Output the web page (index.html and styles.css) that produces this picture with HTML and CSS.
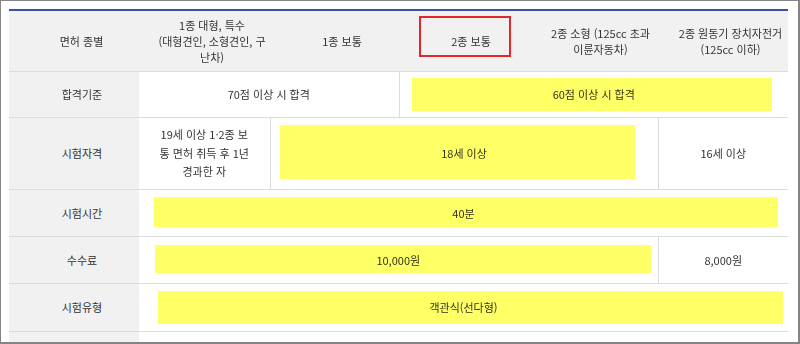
FILE: index.html
```html
<!DOCTYPE html>
<html lang="ko">
<head>
  <meta charset="UTF-8" />
  <meta name="viewport" content="width=device-width, initial-scale=1.0" />
  <title>운전면허 시험 안내</title>
  <link rel="stylesheet" href="styles.css">
</head>
<body>
  <div class="frame">
    <table class="license">
      <colgroup>
        <col class="c-label" />
        <col class="c1" />
        <col class="c2" />
        <col class="c3" />
        <col class="c4" />
        <col class="c5" />
      </colgroup>
      <tr class="r-head">
        <th class="label">면허 종별</th>
        <th>1종 대형, 특수<br/>(대형견인, 소형견인, 구<br/>난차)</th>
        <th>1종 보통</th>
        <th class="pick">2종 보통<span class="box"></span></th>
        <th>2종 소형 (125cc 초과<br/>이륜자동차)</th>
        <th>2종 원동기 장치자전거<br/>(125cc 이하)</th>
      </tr>
      <tr class="r-pass">
        <th class="label">합격기준</th>
        <td colspan="2" class="first">70점 이상 시 합격</td>
        <td colspan="3">60점 이상 시 합격<span class="hl hl-pass"></span></td>
      </tr>
      <tr class="r-age">
        <th class="label">시험자격</th>
        <td class="first multi">19세 이상 1·2종 보<br/>통 면허 취득 후 1년<br/>경과한 자</td>
        <td colspan="3">18세 이상<span class="hl hl-age"></span></td>
        <td>16세 이상</td>
      </tr>
      <tr class="r-time">
        <th class="label">시험시간</th>
        <td colspan="5" class="first">40분<span class="hl hl-time"></span></td>
      </tr>
      <tr class="r-fee">
        <th class="label">수수료</th>
        <td colspan="4" class="first">10,000원<span class="hl hl-fee"></span></td>
        <td>8,000원</td>
      </tr>
      <tr class="r-type">
        <th class="label">시험유형</th>
        <td colspan="5" class="first">객관식(선다형)<span class="hl hl-type"></span></td>
      </tr>
      <tr class="r-more">
        <th class="label"></th>
        <td colspan="5" class="first"></td>
      </tr>
    </table>
  </div>
</body>
</html>
```

FILE: styles.css
```css
body {
  margin: 0;
  font-family: "Noto Sans CJK KR", "Noto Sans", sans-serif;
  background: #fff;
  color: #333;
}
.frame {
  width: 800px;
  height: 344px;
  box-sizing: border-box;
  border: 1px solid #858585;
  border-right-width: 2px;
  border-bottom-width: 2px;
  padding: 8px 0 0 8px;
  overflow: hidden;
}
.license {
  width: 779px;
  border-collapse: collapse;
  table-layout: fixed;
  border-top: 2px solid #3a52a3;
  font-size: 11px;
}
.c-label { width: 130px; }
.c1 { width: 131px; }
.c2 { width: 129px; }
.c3 { width: 129px; }
.c4 { width: 130px; }
.c5 { width: 130px; }

th, td {
  text-align: center;
  vertical-align: middle;
  font-weight: normal;
  padding: 0;
  border-bottom: 1px solid #dcdcdc;
  position: relative;
}
td {
  border-left: 1px solid #dcdcdc;
}
td.first {
  border-left: none;
}
.label {
  background: #f1f1f1;
  padding-left: 16px;
}
.r-head th {
  background: #f1f1f1;
  line-height: 16px;
  padding-left: 15px;
}
.multi {
  line-height: 18.5px;
}

.r-head { height: 61px; }
.r-pass { height: 46px; }
.r-age { height: 72px; }
.r-time { height: 47px; }
.r-fee { height: 47px; }
.r-type { height: 48px; }
.r-more { height: 40px; }

/* red box around the selected licence type */
.box {
  position: absolute;
  left: 20px;
  right: 17px;
  top: 5px;
  bottom: 14px;
  border: 2px solid #e3262b;
}

/* yellow marker highlights */
.hl {
  position: absolute;
  background: #ffff66;
  mix-blend-mode: multiply;
}
.hl-pass { left: 12px; right: 16px; top: 6px; bottom: 6px; }
.hl-age { left: 9px; right: 23px; top: 7px; bottom: 10px; }
.hl-time { left: 15px; right: 10px; top: 7px; bottom: 9px; }
.hl-fee { left: 16px; right: 7px; top: 8px; bottom: 10px; }
.hl-type { left: 19px; right: 5px; top: 7px; bottom: 7px; }
```
